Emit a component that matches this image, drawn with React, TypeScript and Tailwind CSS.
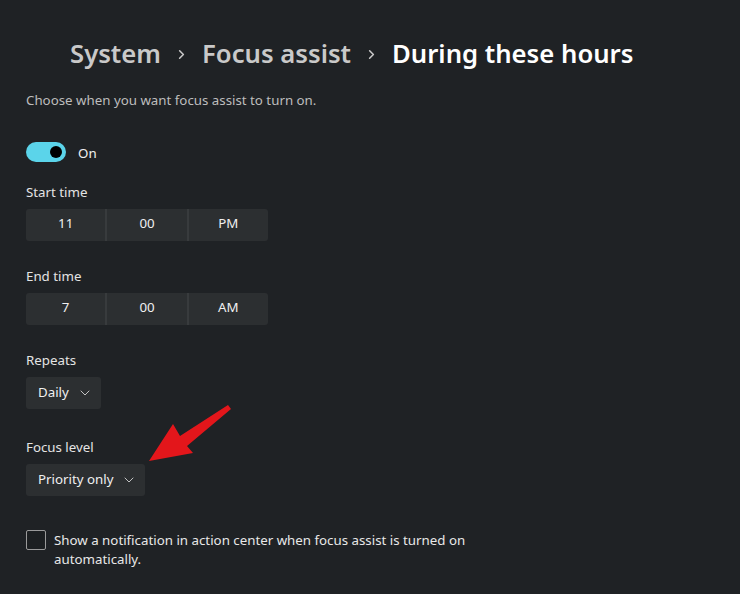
import { ChevronDown, ChevronRight } from 'lucide-react';

const font = { fontFamily: '"Noto Sans", "Open Sans", sans-serif' };

function TimePicker({ parts }: { parts: string[] }) {
  return (
    <div className="flex w-[242px] h-[32px] rounded-[3px] bg-[#2c2f31] overflow-hidden">
      {parts.map((p, i) => (
        <div
          key={i}
          className={`flex-1 flex items-center justify-center pb-[2px] text-[13.3px] text-[#f0f0f0] ${i > 0 ? 'border-l-2 border-[#383b3d]' : ''}`}
        >
          {p}
        </div>
      ))}
    </div>
  );
}

function Dropdown({ label }: { label: string }) {
  return (
    <div className="inline-flex items-center h-[32px] pl-3 pr-[8px] gap-[8px] rounded-[3px] bg-[#2c2f31] text-[13.3px] text-[#f0f0f0]">
      <span className="pb-[1px]">{label}</span>
      <ChevronDown size={16} strokeWidth={1.4} className="text-[#cfcfcf]" />
    </div>
  );
}

function Label({ children }: { children: string }) {
  return <div className="text-[13.3px] leading-[20px] text-[#e4e4e4] mb-[7px]">{children}</div>;
}

export default function App() {
  return (
    <div className="relative w-[740px] h-[594px] bg-[#1f2225] overflow-hidden" style={font}>
      <div className="pt-[36px] pl-[26px]">
        {/* breadcrumb title */}
        <h1 className="ml-[44px] flex items-center h-[36px] text-[25.7px] font-semibold">
          <span className="text-[#c9c9c9]">System</span>
          <ChevronRight size={15} strokeWidth={2.5} className="text-[#c9c9c9] mx-[13px]" />
          <span className="text-[#c9c9c9]">Focus assist</span>
          <ChevronRight size={15} strokeWidth={2.5} className="text-[#c9c9c9] mx-[13px]" />
          <span className="text-white">During these hours</span>
        </h1>

        <p className="mt-[18px] text-[13.3px] leading-[20px] text-[#bdbdbd]">
          Choose when you want focus assist to turn on.
        </p>

        {/* toggle */}
        <div className="mt-[32px] h-[20px] flex items-center gap-[12px]">
          <div className="relative w-[40px] h-[20px] rounded-full bg-[#5bd4ea]">
            <div className="absolute right-[4px] top-[4px] w-[12px] h-[12px] rounded-full bg-black" />
          </div>
          <span className="text-[13.3px] leading-[20px] text-[#f0f0f0] pt-[2px]">On</span>
        </div>

        <div className="mt-[20px]">
          <Label>Start time</Label>
          <TimePicker parts={['11', '00', 'PM']} />
        </div>

        <div className="mt-[25px]">
          <Label>End time</Label>
          <TimePicker parts={['7', '00', 'AM']} />
        </div>

        <div className="mt-[25px]">
          <Label>Repeats</Label>
          <Dropdown label="Daily" />
        </div>

        <div className="mt-[28px]">
          <Label>Focus level</Label>
          <Dropdown label="Priority only" />
        </div>

        {/* checkbox */}
        <div className="mt-[34px] flex items-start gap-[8px]">
          <div className="w-[20px] h-[20px] shrink-0 border border-[#9a9a9a] rounded-[2px] bg-[#1c1f21]" />
          <p className="text-[13.3px] leading-[19px] text-[#e8e8e8] w-[415px] mt-[1px]">
            Show a notification in action center when focus assist is turned on automatically.
          </p>
        </div>
      </div>

      {/* red annotation arrow */}
      <svg className="absolute left-0 top-0 pointer-events-none" width="740" height="594">
        <polygon
          points="149,461 173,424 180,436 228,405 231,409 187,446 193,453"
          fill="#e3161b"
        />
      </svg>
    </div>
  );
}
